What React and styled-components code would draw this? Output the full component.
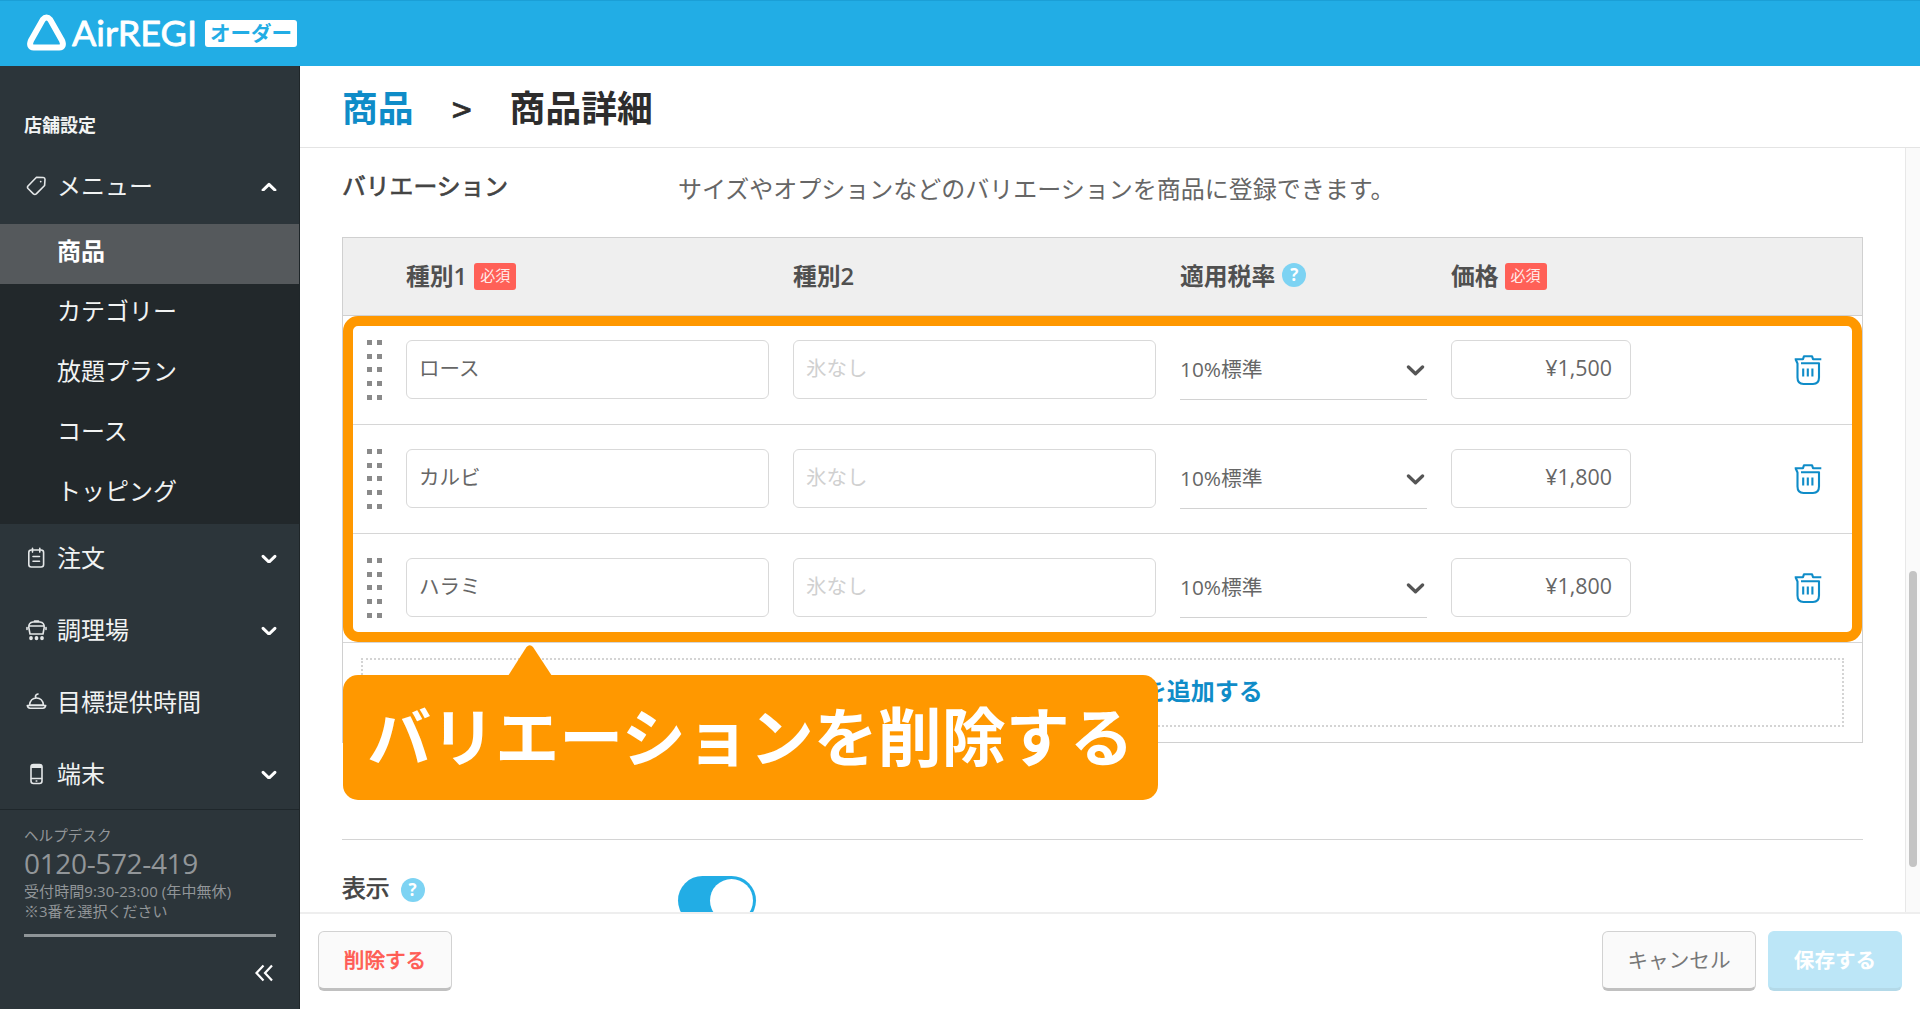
import React from "react";
import styled, { createGlobalStyle, css } from "styled-components";

const Global = createGlobalStyle`
  * { box-sizing: border-box; }
  html, body { margin: 0; padding: 0; }
  body {
    width: 1920px;
    height: 1009px;
    overflow: hidden;
    background: #fff;
    font-family: "Open Sans", "Noto Sans CJK JP", sans-serif;
    color: #4a4a4a;
  }
  button, input { font-family: inherit; }
`;

const Page = styled.div`
  display: flex;
  flex-direction: column;
  width: 1920px;
  height: 1009px;
  overflow: hidden;
`;

const TopBar = styled.header`
  flex: none;
  display: flex;
  align-items: center;
  height: 66px;
  padding: 0 0 1px 26px;
  background: #22ade5;
  border-top: 1px solid #1b9fd6;
  color: #fff;
`;

const Wordmark = styled.svg`
  display: block;
  width: 128px;
  height: 44px;
  margin-left: 4px;
  overflow: visible;
  font-family: Lato, sans-serif;
  font-weight: 400;
  font-size: 35.5px;
  stroke: #fff;
  stroke-width: 0.8px;
  stroke-linejoin: round;
`;

const ProductTag = styled.span`
  width: 92px;
  height: 27px;
  margin: 1px 0 0 6px;
  border-radius: 3px;
  background: #fff;
  color: #22ade5;
  font-family: "Noto Sans CJK JP", sans-serif;
  font-size: 20.5px;
  font-weight: 700;
  line-height: 25px;
  text-align: center;
  white-space: nowrap;
`;

const Body = styled.div`
  flex: 1;
  display: flex;
  min-height: 0;
`;

const Sidebar = styled.nav`
  flex: none;
  display: flex;
  flex-direction: column;
  width: 300px;
  background: #2c353a;
  border-right: 1px solid #1f2629;
  color: #f1f3f3;
  font-family: "Noto Sans CJK JP", sans-serif;
`;

const SideHeading = styled.h2`
  height: 86px;
  margin: 0;
  padding: 44px 0 0 24px;
  font-size: 18px;
  line-height: 28px;
  font-weight: 700;
`;

const SideItem = styled.div`
  display: flex;
  align-items: center;
  height: 72px;
  padding: 0 22px 4px 26px;
  font-size: 24px;
  line-height: 36px;
  svg { flex: none; }
`;

const SideLabel = styled.span`
  flex: 1;
  padding: 0 0 2px 10px;
`;

const SubMenu = styled.div`
  background: #22282b;
`;

const SubItem = styled.div`
  height: 60px;
  padding: 8px 0 0 57px;
  font-size: 24px;
  line-height: 36px;
  font-weight: ${(p) => (p.$active ? 700 : 400)};
  color: ${(p) => (p.$active ? "#fff" : "#f1f3f3")};
  background: ${(p) => (p.$active ? "#55595c" : "transparent")};
`;

const Help = styled.div`
  flex: 1;
  margin-top: -3px;
  padding: 15px 23px 0 24px;
  border-top: 1px solid #1f272b;
  color: #929699;
  font-size: 14.6px;
  line-height: 20px;
`;

const Phone = styled.div`
  height: 36px;
  font-family: "Open Sans", sans-serif;
  font-size: 28px;
  line-height: 37px;
  font-weight: 400;
  letter-spacing: -0.35px;
`;

const HelpLine = styled.div`
  font-family: "Open Sans", "Noto Sans CJK JP", sans-serif;
  font-size: 15px;
  letter-spacing: ${(p) => p.$track || "0"};
  white-space: nowrap;
`;

const HelpRule = styled.div`
  height: 3px;
  margin-top: 13px;
  background: #8f9598;
`;

const Collapse = styled.div`
  display: flex;
  justify-content: flex-end;
  padding: 27px 2px 0 0;
`;

const Main = styled.main`
  flex: 1;
  display: flex;
  flex-direction: column;
  min-width: 0;
`;

const Crumbs = styled.div`
  flex: none;
  display: flex;
  align-items: center;
  height: 82px;
  padding: 0 0 1px 42px;
  border-bottom: 1px solid #e4e4e4;
  font-family: "Noto Sans CJK JP", sans-serif;
  font-size: 35.8px;
  font-weight: 700;
  line-height: 54px;
  color: #2d2d2d;
`;

const CrumbLink = styled.span`
  color: #0f8cc8;
`;

const CrumbSep = styled.span`
  width: 96px;
  padding-top: 4px;
  text-align: center;
  font-size: 35px;
  font-weight: 400;
  -webkit-text-stroke: 0.8px currentColor;
`;

const Scroller = styled.div`
  flex: 1;
  display: flex;
  min-height: 0;
  overflow: hidden;
`;

const Content = styled.div`
  flex: 1;
  height: 764px;
  padding: 0 42px;
  overflow: hidden;
`;

const Track = styled.div`
  flex: none;
  width: 15px;
  padding: 423px 3px 0 3px;
  background: #fafafa;
  border-left: 1px solid #e8e8e8;
`;

const Thumb = styled.div`
  height: 296px;
  border-radius: 4px;
  background: #c4c4c4;
`;

const Section = styled.div`
  display: grid;
  grid-template-columns: 336px 1fr;
  font-family: "Noto Sans CJK JP", sans-serif;
  font-size: 24px;
  line-height: 36px;
`;

const IntroSection = styled(Section)`
  height: 89px;
  padding-top: 19px;
`;

const SectionTitle = styled.div`
  display: flex;
  font-size: 23.8px;
  color: #444;
  -webkit-text-stroke: 0.7px currentColor;
`;

const SectionText = styled.div`
  padding-top: 3px;
  color: #666;
`;

const Table = styled.div`
  position: relative;
  width: 1521px;
  height: 506px;
  border: 1px solid #d0d0d0;
`;

const columns = css`
  display: grid;
  grid-template-columns: 15px 363px 363px 247px 180px 1fr;
  column-gap: 24px;
  padding-left: 24px;
`;

const HeadRow = styled.div`
  ${columns}
  height: 78px;
  background: #efefef;
  border-bottom: 1px solid #d0d0d0;
`;

const HeadCell = styled.div`
  display: flex;
  align-items: center;
  padding-bottom: 5px;
  font-family: "Open Sans", "Noto Sans CJK JP", sans-serif;
  font-size: 23.8px;
  font-weight: 600;
  color: #505050;
`;

const Required = styled.span`
  width: 42px;
  height: 27px;
  margin: 5px 0 0 ${(p) => p.$gap}px;
  border-radius: 3px;
  background: #ff6057;
  color: #ffecea;
  font-size: 15px;
  font-weight: 400;
  line-height: 24px;
  text-align: center;
`;

const HelpDot = styled.span`
  display: flex;
  align-items: center;
  justify-content: center;
  width: 24px;
  height: 24px;
  margin: ${(p) => p.$margin};
  border-radius: 50%;
  background: #7dd3f3;
  color: #fff;
  font-family: "Open Sans", sans-serif;
  font-size: 17px;
  font-weight: 700;
  line-height: 24px;
  -webkit-text-stroke: 0;
`;

const Row = styled.div`
  ${columns}
  height: 109px;
  padding-top: 24px;
  border-bottom: 1px solid #d6d6d6;
`;

const Handle = styled.div`
  display: grid;
  grid-template-columns: 5px 5px;
  grid-auto-rows: 5px;
  gap: 8.65px 5px;
  i { background: #8a8a8a; }
`;

const Field = styled.div`
  height: 59px;
  padding: 0 ${(p) => (p.$right ? 18 : 12)}px;
  border: 1px solid #d9d9d9;
  border-radius: 6px;
  background: #fff;
  font-size: ${(p) => (p.$right ? 21.4 : 20.5)}px;
  line-height: ${(p) => (p.$right ? 54 : 55)}px;
  text-align: ${(p) => (p.$right ? "right" : "left")};
  color: ${(p) => (p.$placeholder ? "#d0d0d0" : "#666")};
`;

const Select = styled.div`
  display: flex;
  align-items: center;
  justify-content: space-between;
  height: 60px;
  padding: 0 2px 0 0;
  border-bottom: 1px solid #d2d2d2;
  font-size: 20.8px;
  color: #666;
  span { padding-bottom: 4px; }
`;

const TrashCell = styled.div`
  padding: 14px 0 0 139px;
`;

const AddArea = styled.div`
  padding: 15px 18px;
`;

const AddButton = styled.div`
  display: flex;
  align-items: center;
  justify-content: center;
  gap: 10px;
  height: 69px;
  padding: 0 0 6px 3px;
  border: 2px dotted #d4d4d4;
  color: #0f8cc8;
  font-family: "Noto Sans CJK JP", sans-serif;
  font-size: 24px;
  font-weight: 700;
`;

const Highlight = styled.div`
  position: absolute;
  left: 0;
  top: 78px;
  width: 1519px;
  height: 326px;
  border: 10px solid #ff9800;
  border-radius: 15px;
`;

const Callout = styled.div`
  position: absolute;
  left: 0;
  top: 437px;
  width: 815px;
  height: 125px;
  border-radius: 15px;
  background: #ff9800;
  color: #fff;
  font-family: "Noto Sans CJK JP", sans-serif;
  font-size: 64px;
  font-weight: 700;
  line-height: 117px;
  text-align: center;
  white-space: nowrap;
`;

const Pointer = styled.svg`
  position: absolute;
  left: 163px;
  top: -30px;
`;

const Divider = styled.div`
  height: 1px;
  margin-top: 96px;
  width: 1521px;
  background: #d4d4d4;
`;

const DisplaySection = styled(Section)`
  padding-top: 29px;
`;

const Toggle = styled.div`
  display: flex;
  justify-content: flex-end;
  align-items: center;
  width: 78px;
  height: 49px;
  margin-top: 7px;
  padding: 3px;
  border-radius: 25px;
  background: #22ade5;
`;

const Knob = styled.div`
  width: 43px;
  height: 43px;
  border-radius: 50%;
  background: #fff;
`;

const Footer = styled.footer`
  flex: none;
  display: flex;
  gap: 12px;
  height: 97px;
  padding: 17px 18px 0;
  border-top: 2px solid #eeeeee;
`;

const looks = {
  danger: css`
    width: 134px;
    margin-right: auto;
    color: #ff5a52;
    -webkit-text-stroke: 0.7px currentColor;
  `,
  plain: css`
    width: 154px;
    color: #777;
  `,
  primary: css`
    width: 134px;
    color: #fff;
    font-weight: 700;
    background: #bce6f7;
    border-color: #bce6f7;
    border-bottom-color: #b3d9e8;
  `,
};

const Button = styled.button`
  height: 60px;
  margin: 0;
  padding: 0 0 2px;
  border: 1px solid #d2d2d2;
  border-bottom: 3px solid #c0c0c0;
  border-radius: 6px;
  background: #fafafa;
  font-family: "Noto Sans CJK JP", sans-serif;
  font-size: 20.6px;
  font-weight: 400;
  white-space: nowrap;
  ${(p) => looks[p.$look]}
`;

function Chevron({ up, color = "#fff", width = 16, stroke = 3 }) {
  return (
    <svg width={width} height={width * 0.68} viewBox="0 0 16 11" fill="none" stroke={color} strokeWidth={stroke} strokeLinecap="round" strokeLinejoin="round">
      <path d={up ? "M2 9.200 8 3.400l6 5.800" : "M2 3.400 8 9.200l6-5.800"} />
    </svg>
  );
}

function LogoMark() {
  return (
    <svg width="41" height="40" viewBox="0 0 41 40" fill="none" stroke="#fff" strokeWidth="6" strokeLinejoin="round">
      <path d="M16.800 6.600 Q20.500 2.200 24.200 6.600 L36 27.500 Q38.800 34 33 34.600 H8 Q2.200 34 5 27.500 Z" />
    </svg>
  );
}

const iconProps = { width: 21, height: 22, viewBox: "0 0 21 22", fill: "none", stroke: "#e4e7e8", strokeWidth: 1.6, strokeLinejoin: "round", strokeLinecap: "round" };

function TagIcon() {
  return (
    <svg {...iconProps}>
      <path d="M10.500 2.200 17.300 2.500Q18.900 2.700 19 4.300L18.600 10.500 10.300 18.900Q8.900 20 7.400 18.900L2 13.500Q1 12.200 2 11Z" />
      <circle cx="14.700" cy="6.600" r="0.900" fill="#e4e7e8" stroke="none" />
    </svg>
  );
}
function NoteIcon() {
  return (
    <svg {...iconProps}>
      <rect x="2.800" y="3" width="14.800" height="17" rx="2.500" />
      <path d="M6.500 1.300v3.800M13.800 1.300v3.800M7 9.500h6.500M7 14.300h6.500" />
    </svg>
  );
}
function KitchenIcon() {
  return (
    <svg {...iconProps}>
      <path d="M4 15 2.800 8.500Q2.500 3.500 7 3h7Q18.500 3.500 18.200 8.500L17 15ZM3 7h15M8.500 2h4M1 8.500v2M20 8.500v2" />
      <path d="M5 18.700v.8M10.500 18.700v.8M16 18.700v.8" strokeWidth="3.600" />
    </svg>
  );
}
function ServingIcon() {
  return (
    <svg {...iconProps}>
      <path d="M3.500 14Q4.500 7 10.500 7T17.500 14ZM1.300 14.500Q2 17.200 4 17.200H17Q19 17.200 19.700 14.500ZM9.500 6.500Q9 3.500 12 3" />
    </svg>
  );
}
function PhoneIcon() {
  return (
    <svg {...iconProps}>
      <rect x="5" y="1.500" width="11" height="19" rx="2.500" />
      <path d="M5.500 4.200h10M5.500 15.500h10" />
      <path d="M6.500 2.800h8" strokeWidth="2.500" />
      <path d="M10.200 18h.6" />
    </svg>
  );
}
function TrashIcon() {
  return (
    <svg width="28" height="32" viewBox="0 0 28 32" fill="none" stroke="#0f8cc8" strokeWidth="2.100" strokeLinejoin="round">
      <path d="M.7 5.200H9L10 2.200H18L19 5.200H27.300M1.700 5.500 3.500 9.500V23.500Q3.500 30 9.500 30H19Q25 30 25 23.500V9.200H7" />
      <path d="M9.200 14.500v8M13.800 14.500v8M18.400 14.500v8" />
    </svg>
  );
}

const submenu = ["商品", "カテゴリー", "放題プラン", "コース", "トッピング"];
const sections = [
  { label: "注文", Icon: NoteIcon, expandable: true },
  { label: "調理場", Icon: KitchenIcon, expandable: true },
  { label: "目標提供時間", Icon: ServingIcon, expandable: false },
  { label: "端末", Icon: PhoneIcon, expandable: true },
];
const rows = [
  { name: "ロース", price: "¥1,500" },
  { name: "カルビ", price: "¥1,800" },
  { name: "ハラミ", price: "¥1,800" },
];

export default function App() {
  return (
    <Page>
      <Global />
      <TopBar>
        <LogoMark />
        <Wordmark viewBox="0 0 128 44">
          <text x="1" y="35" fill="#fff" textLength="125" lengthAdjust="spacingAndGlyphs">AirREGI</text>
        </Wordmark>
        <ProductTag>オーダー</ProductTag>
      </TopBar>
      <Body>
        <Sidebar>
          <SideHeading>店舗設定</SideHeading>
          <SideItem>
            <TagIcon />
            <SideLabel>メニュー</SideLabel>
            <Chevron up />
          </SideItem>
          <SubMenu>
            {submenu.map((label, i) => (
              <SubItem key={label} $active={i === 0}>{label}</SubItem>
            ))}
          </SubMenu>
          {sections.map(({ label, Icon, expandable }) => (
            <SideItem key={label}>
              <Icon />
              <SideLabel>{label}</SideLabel>
              {expandable && <Chevron />}
            </SideItem>
          ))}
          <Help>
            ヘルプデスク
            <Phone>0120-572-419</Phone>
            <HelpLine $track="0.08px">受付時間9:30-23:00 (年中無休)</HelpLine>
            <HelpLine>※3番を選択ください</HelpLine>
            <HelpRule />
            <Collapse>
              <svg width="20" height="18" viewBox="0 0 20 18" fill="none" stroke="#fff" strokeWidth="2.200">
                <path d="M9.500 1.500 2.500 9l7 7.500M18 1.500 11 9l7 7.500" />
              </svg>
            </Collapse>
          </Help>
        </Sidebar>
        <Main>
          <Crumbs>
            <CrumbLink>商品</CrumbLink>
            <CrumbSep>&gt;</CrumbSep>
            <span>商品詳細</span>
          </Crumbs>
          <Scroller>
            <Content>
              <IntroSection>
                <SectionTitle>バリエーション</SectionTitle>
                <SectionText>サイズやオプションなどのバリエーションを商品に登録できます。</SectionText>
              </IntroSection>
              <Table>
                <HeadRow>
                  <span />
                  <HeadCell>種別1<Required $gap={7}>必須</Required></HeadCell>
                  <HeadCell>種別2</HeadCell>
                  <HeadCell>適用税率<HelpDot $margin="1px 0 0 7px">?</HelpDot></HeadCell>
                  <HeadCell>価格<Required $gap={6}>必須</Required></HeadCell>
                </HeadRow>
                {rows.map((row) => (
                  <Row key={row.name}>
                    <Handle>
                      {Array.from({ length: 10 }, (_, i) => <i key={i} />)}
                    </Handle>
                    <Field>{row.name}</Field>
                    <Field $placeholder>氷なし</Field>
                    <Select>
                      <span>10%標準</span>
                      <Chevron color="#555" width={19} stroke={2.8} />
                    </Select>
                    <Field $right>{row.price}</Field>
                    <TrashCell><TrashIcon /></TrashCell>
                  </Row>
                ))}
                <AddArea>
                  <AddButton>
                    <svg width="20" height="20" viewBox="0 0 20 20" stroke="#0f8cc8" strokeWidth="3">
                      <path d="M10 1v18M1 10h18" />
                    </svg>
                    バリエーションを追加する
                  </AddButton>
                </AddArea>
                <Highlight />
                <Callout>
                  <Pointer width="48" height="31" viewBox="0 0 48 31">
                    <path d="M2 31 20.500 2Q23.700-1.500 27 2L46 31Z" fill="#ff9800" />
                  </Pointer>
                  バリエーションを削除する
                </Callout>
              </Table>
              <Divider />
              <DisplaySection>
                <SectionTitle>表示<HelpDot $margin="9px 0 0 11px">?</HelpDot></SectionTitle>
                <Toggle><Knob /></Toggle>
              </DisplaySection>
            </Content>
            <Track><Thumb /></Track>
          </Scroller>
          <Footer>
            <Button $look="danger">削除する</Button>
            <Button $look="plain">キャンセル</Button>
            <Button $look="primary">保存する</Button>
          </Footer>
        </Main>
      </Body>
    </Page>
  );
}
